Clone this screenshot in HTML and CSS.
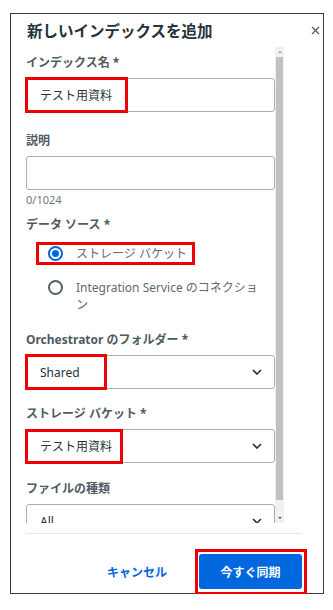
FILE: index.html
```html
<!DOCTYPE html>
<html lang="ja">
<head>
<meta charset="utf-8">
<title>新しいインデックスを追加</title>
<link rel="stylesheet" href="styles.css">
</head>
<body>
<div class="dialog">
  <div class="header">
    <h1 class="title">新しいインデックスを追加</h1>
    <span class="close" aria-label="閉じる">
      <svg width="9" height="9" viewBox="0 0 9 9"><path d="M1 1 L8 8 M8 1 L1 8" stroke="#526069" stroke-width="1.3" fill="none"/></svg>
    </span>
  </div>
  <div class="body">
    <div class="scroll">
      <div class="field field-gap-text">
        <div class="label">インデックス名 *</div>
        <div class="control">
          <div class="input">テスト用資料</div>
          <span class="mark mark-name"></span>
        </div>
      </div>
      <div class="field">
        <div class="label">説明</div>
        <div class="input"></div>
        <div class="counter">0/1024</div>
      </div>
      <div class="field field-gap-radio">
        <div class="label">データ ソース *</div>
        <div class="radios">
          <div class="radio-row">
            <span class="radio checked"><span class="dot"></span></span>
            <span class="radio-text">ストレージ バケット</span>
            <span class="mark mark-radio"></span>
          </div>
          <div class="radio-row">
            <span class="radio"></span>
            <span class="radio-text">Integration Service のコネクション</span>
          </div>
        </div>
      </div>
      <div class="field field-gap-select">
        <div class="label">Orchestrator のフォルダー *</div>
        <div class="control">
          <div class="input select"><span>Shared</span>
            <svg class="chev" width="10" height="6" viewBox="0 0 10 6"><path d="M1 1 L5 5 L9 1" stroke="#273139" stroke-width="1.6" fill="none"/></svg>
          </div>
          <span class="mark mark-folder"></span>
        </div>
      </div>
      <div class="field field-gap-select2">
        <div class="label">ストレージ バケット *</div>
        <div class="control">
          <div class="input select"><span>テスト用資料</span>
            <svg class="chev" width="10" height="6" viewBox="0 0 10 6"><path d="M1 1 L5 5 L9 1" stroke="#273139" stroke-width="1.6" fill="none"/></svg>
          </div>
          <span class="mark mark-bucket"></span>
        </div>
      </div>
      <div class="field">
        <div class="label">ファイルの種類</div>
        <div class="input select"><span>All</span>
          <svg class="chev" width="10" height="6" viewBox="0 0 10 6"><path d="M1 1 L5 5 L9 1" stroke="#273139" stroke-width="1.6" fill="none"/></svg>
        </div>
      </div>
    </div>
    <div class="scrollbar">
      <div class="sb-arrow"><span class="tri-up"></span></div>
      <div class="sb-thumb"></div>
      <div class="sb-track"></div>
      <div class="sb-arrow"><span class="tri-down"></span></div>
    </div>
  </div>
  <div class="footer">
    <div class="actions">
      <span class="btn-text">キャンセル</span>
      <div class="primary-wrap">
        <span class="btn-primary">今すぐ同期</span>
        <span class="mark mark-btn"></span>
      </div>
    </div>
  </div>
</div>
</body>
</html>
```

FILE: styles.css
```css
html, body {
  margin: 0;
  padding: 0;
  background: #ffffff;
}
body {
  font-family: "Noto Sans", "Noto Sans CJK JP", sans-serif;
  color: #273139;
}
.dialog {
  margin: 13px 0 0 10px;
  width: 314px;
  height: 581px;
  box-sizing: border-box;
  border: 1px solid #3a3a3a;
  display: flex;
  flex-direction: column;
  background: #fff;
}
.header {
  height: 33px;
  flex: none;
  display: flex;
  align-items: center;
  justify-content: space-between;
  padding: 0 3px 0 16px;
}
.title {
  margin: 0;
  font-size: 15.5px;
  font-weight: 700;
  line-height: 20px;
  color: #273139;
}
.close {
  display: flex;
  width: 9px;
  height: 9px;
}
.body {
  height: 476px;
  flex: none;
  display: flex;
}
.scroll {
  width: 264px;
  box-sizing: border-box;
  padding: 8px 0 0 15px;
  overflow: hidden;
}
.field {
  display: flex;
  flex-direction: column;
}
.field-gap-text { margin-bottom: 21px; }
.field-gap-radio { margin-bottom: 19px; }
.field-gap-select { margin-bottom: 17px; }
.field-gap-select2 { margin-bottom: 18px; }
.label {
  font-size: 12px;
  line-height: 16px;
  font-weight: 700;
  color: #4f5a63;
  margin-bottom: 7px;
}
.control {
  position: relative;
}
.input {
  height: 34px;
  box-sizing: border-box;
  border: 1px solid #a4b1b8;
  border-radius: 3px;
  padding: 0 12px 0 13px;
  display: flex;
  align-items: center;
  font-size: 12px;
  color: #273139;
  flex: none;
}
.select {
  justify-content: space-between;
}
.chev {
  flex: none;
}
.counter {
  margin-top: 3px;
  font-size: 11px;
  line-height: 14px;
  color: #6b7882;
  margin-bottom: 10px;
}
.radios {
  margin-top: 5px;
  display: flex;
  flex-direction: column;
  gap: 17px;
  padding-right: 12px;
}
.radio-row {
  position: relative;
  display: flex;
  align-items: flex-start;
  margin-left: 10px;
}
.radio {
  flex: none;
  width: 15px;
  height: 15px;
  box-sizing: border-box;
  border: 2px solid #526069;
  border-radius: 50%;
  margin: 1px 13px 0 12px;
  display: flex;
  align-items: center;
  justify-content: center;
}
.radio.checked {
  border-color: #0067df;
}
.dot {
  width: 7px;
  height: 7px;
  border-radius: 50%;
  background: #0067df;
}
.radio-text {
  font-size: 12px;
  line-height: 17px;
  color: #5d6a73;
}
.scrollbar {
  width: 9px;
  flex: none;
  display: flex;
  flex-direction: column;
  background: #f1f1f1;
}
.sb-arrow {
  height: 10px;
  flex: none;
  display: flex;
  align-items: center;
  justify-content: center;
}
.tri-up {
  width: 0;
  height: 0;
  border-left: 2px solid transparent;
  border-right: 2px solid transparent;
  border-bottom: 2px solid #a3a3a3;
}
.tri-down {
  width: 0;
  height: 0;
  border-left: 2px solid transparent;
  border-right: 2px solid transparent;
  border-top: 2px solid #505050;
}
.sb-thumb {
  height: 443px;
  flex: none;
  margin: 0 1px;
  background: #c1c1c1;
}
.sb-track {
  flex: 1;
}
.footer {
  flex: 1;
  padding: 10px 21px 0 15px;
}
.actions {
  border-top: 1px solid #e3e6e8;
  padding-top: 20px;
  display: flex;
  justify-content: flex-end;
  align-items: center;
}
.btn-text {
  font-size: 12px;
  font-weight: 700;
  color: #0067df;
  margin-right: 32px;
}
.primary-wrap {
  position: relative;
}
.btn-primary {
  display: flex;
  align-items: center;
  justify-content: center;
  width: 103px;
  height: 35px;
  box-sizing: border-box;
  border-radius: 3px;
  background: #0067df;
  color: #fff;
  font-size: 12px;
  font-weight: 700;
}
.mark {
  position: absolute;
  box-sizing: border-box;
  border: 3px solid #f00000;
  pointer-events: none;
}
.mark-name { left: -1px; top: -1px; width: 103px; height: 36px; }
.mark-radio { left: 0; top: -3px; width: 159px; height: 23px; }
.mark-folder { left: -1px; top: -1px; width: 82px; height: 36px; }
.mark-bucket { left: -1px; top: 0; width: 98px; height: 35px; }
.mark-btn { left: -4px; top: -5px; width: 112px; height: 46px; }
```
